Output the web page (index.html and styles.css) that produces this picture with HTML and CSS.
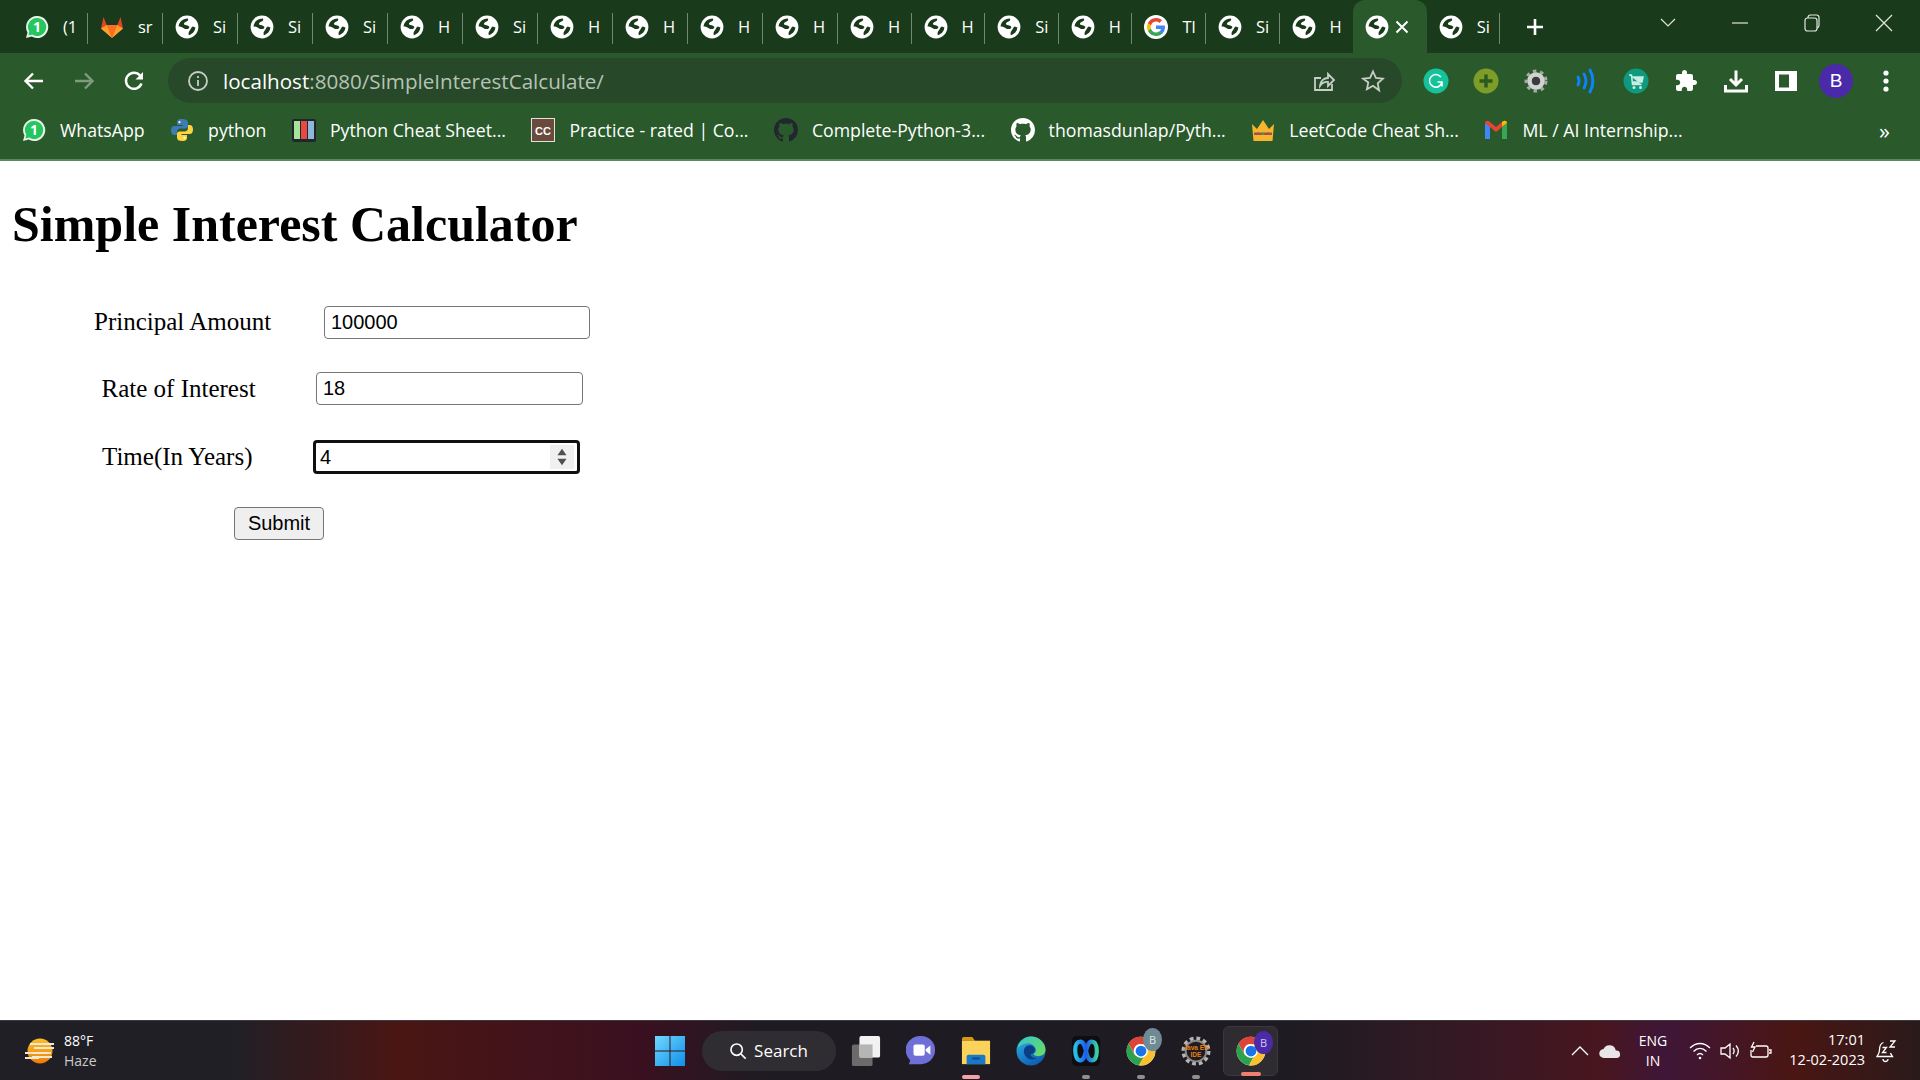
FILE: index.html
```html
<!DOCTYPE html>
<html lang="en">
<head>
<meta charset="utf-8">
<title>Simple Interest Calculator</title>
<link rel="stylesheet" href="styles.css">
</head>
<body>
<svg class="defs" aria-hidden="true">
  <defs>
    <linearGradient id="winG" x1="0" y1="0" x2="1" y2="1"><stop offset="0" stop-color="#6fd8ff"/><stop offset="1" stop-color="#0f8fe8"/></linearGradient>
    <linearGradient id="sunG" x1="0" y1="0" x2="0" y2="1"><stop offset="0" stop-color="#fbc02d"/><stop offset="1" stop-color="#ef7c08"/></linearGradient>
    <linearGradient id="edgeG" x1="0" y1="0" x2=".6" y2="1"><stop offset="0" stop-color="#2fb4ec"/><stop offset="1" stop-color="#0c5fb0"/></linearGradient>
    <linearGradient id="edgeH" x1="0" y1="0" x2="1" y2="1"><stop offset="0" stop-color="#36c6c8"/><stop offset="1" stop-color="#6fdc5c"/></linearGradient>
    <linearGradient id="webexG" x1="0" y1="0" x2="1" y2="0"><stop offset="0" stop-color="#27c0e8"/><stop offset=".5" stop-color="#1a5cf0"/><stop offset="1" stop-color="#3ad0a0"/></linearGradient>
    <symbol id="globe" viewBox="0 0 24 24">
      <circle cx="12" cy="12" r="11.400" fill="#fff"/>
      <path d="M3.600 11.500C3.800 7.300 7.300 3.600 12.800 3.500c1 1.300.2 2.500-1.300 3.100-1.600.7-3 1.600-2.400 3 1.400 1 3.800.6 5 2 .7 1.200-.2 2.200-1.400 2.400-2.600.2-3.500-.2-4.700-1.300-1.400-.8-2.700-1-4.400-1.200z" fill="#1a3a1c"/>
      <path d="M13.800 20.200c3.600-.8 6.200-3.900 6.600-7.600l-2.600-1.200c-1.400.4-1.800 2.200-2.700 3.600-.9 1.300-2.100 2.300-1.300 5.200z" fill="#1a3a1c"/>
    </symbol>
    <symbol id="whatsapp" viewBox="0 0 24 24">
      <path d="M12 1a11 11 0 0 0-9.500 16.500L1 23l5.700-1.500A11 11 0 1 0 12 1z" fill="#e9f5ea"/>
      <path d="M12 3a9 9 0 0 0-7.700 13.700L3.400 20.500l3.800-1A9 9 0 1 0 12 3z" fill="#25c55f"/>
      <text x="12" y="17" class="wa-num">1</text>
    </symbol>
    <symbol id="github" viewBox="0 0 16 16">
      <path d="M8 0C3.580 0 0 3.580 0 8c0 3.540 2.290 6.530 5.470 7.590.4.070.55-.17.55-.38 0-.19-.01-.82-.01-1.490-2.010.37-2.530-.49-2.690-.94-.09-.23-.48-.94-.82-1.130-.28-.15-.68-.52-.01-.53.63-.01 1.080.58 1.230.82.720 1.210 1.870.87 2.330.66.070-.52.28-.87.51-1.070-1.780-.2-3.640-.89-3.640-3.950 0-.87.31-1.590.82-2.150-.08-.2-.36-1.020.08-2.120 0 0 .67-.21 2.200.82.64-.18 1.320-.27 2-.27.68 0 1.360.09 2 .27 1.530-1.040 2.200-.82 2.200-.82.44 1.100.16 1.920.08 2.120.51.56.82 1.270.82 2.150 0 3.070-1.870 3.750-3.650 3.950.29.25.54.73.54 1.480 0 1.070-.01 1.930-.01 2.200 0 .21.15.46.55.38A8.013 8.013 0 0 0 16 8c0-4.420-3.580-8-8-8z"/>
    </symbol>
    <symbol id="chrome" viewBox="0 0 24 24">
      <circle cx="12" cy="12" r="11.500" fill="#fff"/>
      <path d="M12 .5A11.500 11.500 0 0 0 2 6.200l5 8.700A5.500 5.500 0 0 1 12 6.500h10A11.500 11.500 0 0 0 12 .5z" fill="#db4437"/>
      <path d="M2 6.200A11.500 11.500 0 0 0 10.400 23.400l5-8.800A5.500 5.500 0 0 1 7 14.900z" fill="#2ba24c"/>
      <path d="M22 6.500h-10a5.500 5.500 0 0 1 3.400 8.100l-5 8.800A11.500 11.500 0 0 0 22 6.500z" fill="#fbc02d"/>
      <circle cx="12" cy="12" r="5.500" fill="#fff"/>
      <circle cx="12" cy="12" r="4.300" fill="#1a73e8"/>
    </symbol>
  </defs>
</svg>

<header class="chrome">
  <div class="tabstrip">
    <div class="tab"><svg class="fav"><use href="#whatsapp"/></svg><span class="tab-title">(1</span></div>
    <div class="tab">
      <svg class="fav" viewBox="0 0 24 24"><path d="M1 13.500 3.500 2l3.200 8h10.600l3.200-8L23 13.500 12 23z" fill="#e24329"/><path d="M6.700 10h10.600L12 23z" fill="#fc6d26"/><path d="M1 13.500 12 23l-5.300-13zM23 13.500 12 23l5.300-13z" fill="#fca326"/></svg>
      <span class="tab-title">sr</span>
    </div>
    <div class="tab"><svg class="fav"><use href="#globe"/></svg><span class="tab-title">Si</span></div>
    <div class="tab"><svg class="fav"><use href="#globe"/></svg><span class="tab-title">Si</span></div>
    <div class="tab"><svg class="fav"><use href="#globe"/></svg><span class="tab-title">Si</span></div>
    <div class="tab"><svg class="fav"><use href="#globe"/></svg><span class="tab-title">H</span></div>
    <div class="tab"><svg class="fav"><use href="#globe"/></svg><span class="tab-title">Si</span></div>
    <div class="tab"><svg class="fav"><use href="#globe"/></svg><span class="tab-title">H</span></div>
    <div class="tab"><svg class="fav"><use href="#globe"/></svg><span class="tab-title">H</span></div>
    <div class="tab"><svg class="fav"><use href="#globe"/></svg><span class="tab-title">H</span></div>
    <div class="tab"><svg class="fav"><use href="#globe"/></svg><span class="tab-title">H</span></div>
    <div class="tab tab-n"><svg class="fav"><use href="#globe"/></svg><span class="tab-title">H</span></div>
    <div class="tab tab-n"><svg class="fav"><use href="#globe"/></svg><span class="tab-title">H</span></div>
    <div class="tab tab-n"><svg class="fav"><use href="#globe"/></svg><span class="tab-title">Si</span></div>
    <div class="tab tab-n"><svg class="fav"><use href="#globe"/></svg><span class="tab-title">H</span></div>
    <div class="tab tab-n">
      <svg class="fav" viewBox="0 0 24 24"><circle cx="12" cy="12" r="12" fill="#fff"/><path d="M21 12.300c0-.7-.1-1.300-.2-1.900H12v3.600h5a4.300 4.300 0 0 1-1.900 2.800v2.300h3A9 9 0 0 0 21 12.300z" fill="#4285f4"/><path d="M12 21c2.400 0 4.500-.8 6-2.200l-3-2.300c-.8.600-1.800.9-3 .9-2.300 0-4.300-1.600-5-3.700H4v2.400A9 9 0 0 0 12 21z" fill="#34a853"/><path d="M7 13.700a5.400 5.400 0 0 1 0-3.400V7.900H4a9 9 0 0 0 0 8.200z" fill="#fbbc05"/><path d="M12 6.600c1.300 0 2.500.5 3.400 1.300L18 5.300A9 9 0 0 0 4 7.900l3 2.400c.7-2.100 2.700-3.700 5-3.700z" fill="#ea4335"/></svg>
      <span class="tab-title">Tl</span>
    </div>
    <div class="tab tab-n"><svg class="fav"><use href="#globe"/></svg><span class="tab-title">Si</span></div>
    <div class="tab tab-n tab-nosep"><svg class="fav"><use href="#globe"/></svg><span class="tab-title">H</span></div>
    <div class="tab tab-n tab-active">
      <svg class="fav"><use href="#globe"/></svg>
      <svg class="tab-close" viewBox="0 0 14 14"><path d="M1.500 1.500l11 11M12.500 1.500l-11 11"/></svg>
    </div>
    <div class="tab tab-n"><svg class="fav"><use href="#globe"/></svg><span class="tab-title">Si</span></div>
    <svg class="newtab" viewBox="0 0 20 20"><path d="M10 2v16M2 10h16"/></svg>
    <div class="winctl">
      <svg class="wc" viewBox="0 0 20 20"><path d="M3 6l7 7 7-7"/></svg>
      <svg class="wc" viewBox="0 0 20 20"><path d="M2 10h16"/></svg>
      <svg class="wc" viewBox="0 0 20 20"><rect x="3" y="5" width="12" height="13" rx="2.500"/><path d="M6 5V4.500A2.500 2.500 0 0 1 8.500 2h6A2.500 2.500 0 0 1 17 4.500v8a2.500 2.500 0 0 1-2 2.300"/></svg>
      <svg class="wc" viewBox="0 0 20 20"><path d="M2 2l16 16M18 2L2 18"/></svg>
    </div>
  </div>

  <div class="toolbar">
    <button class="tbtn"><svg viewBox="0 0 24 24" class="ico-stroke"><path d="M21 12H4M11 4.500 3.500 12l7.500 7.500"/></svg></button>
    <button class="tbtn"><svg viewBox="0 0 24 24" class="ico-stroke ico-dim"><path d="M3 12h17M13 4.500l7.500 7.500-7.500 7.500"/></svg></button>
    <button class="tbtn"><svg viewBox="0 0 24 24" class="ico-stroke"><path d="M19.500 14.500A8 8 0 1 1 18 6.500"/><path class="ico-fill" d="M21 3v7.500h-7.500z"/></svg></button>
    <div class="omnibox">
      <svg class="omni-ico" viewBox="0 0 24 24"><circle cx="12" cy="12" r="9" class="omni-ring"/><path d="M12 11v6M12 7v2" class="omni-ring"/></svg>
      <span class="url"><span class="url-host">localhost</span>:8080/SimpleInterestCalculate/</span>
      <svg class="omni-ico omni-share" viewBox="0 0 24 24"><path d="M20 15v6H3V9h6M8 17c0-5 4-8 8-8V5l6 6-6 6v-4c-3-.3-6 1-8 4z" class="omni-ring"/></svg>
      <svg class="omni-ico" viewBox="0 0 24 24"><path d="M12 2.500l2.900 6.400 7 .8-5.200 4.700 1.400 6.900L12 16.800l-6.100 3.500 1.400-6.900L2.100 9.700l7-.8z" class="omni-ring"/></svg>
    </div>
    <button class="tbtn"><svg viewBox="0 0 24 24"><circle cx="12" cy="12" r="12.500" fill="#15c39a"/><path d="M16.800 8A6.300 6.300 0 1 0 18 13h-4.500M18 17.500V13" fill="none" stroke="#fff" stroke-width="1.600"/></svg></button>
    <button class="tbtn"><svg viewBox="0 0 24 24"><circle cx="12" cy="12" r="12.500" fill="#7d9c28"/><path d="M12 5.500v13M5.500 12h13" stroke="#2b5a20" stroke-width="3.400"/></svg></button>
    <button class="tbtn"><svg viewBox="0 0 24 24"><circle cx="12" cy="12" r="10" fill="none" stroke="#a8a8a8" stroke-width="3" stroke-dasharray="3.500 3.780"/><circle cx="12" cy="12" r="6.500" fill="none" stroke="#d2d2d2" stroke-width="4.500"/><circle cx="12" cy="12" r="4" fill="#3b3b3b"/></svg></button>
    <button class="tbtn"><svg viewBox="0 0 24 24" fill="none" stroke="#0a84ff" stroke-linecap="round"><path d="M4 8c1.300 2.500 1.300 5.500 0 8" stroke-width="2.800"/><path d="M10 5c2.400 4.300 2.400 9.700 0 14" stroke-width="2.800"/><path d="M16 1c3.800 6.500 3.800 15.500 0 22" stroke-width="3"/></svg></button>
    <button class="tbtn"><svg viewBox="0 0 24 24"><circle cx="12" cy="12" r="12.500" fill="#0d9a7e"/><path d="M5 6h2.500l1 9.500h9M8 8h11l-1 5H8.500" fill="#c9ece3" stroke="#c9ece3" stroke-width="1.500"/><circle cx="10" cy="18.500" r="1.500" fill="#c9ece3"/><circle cx="16.500" cy="18.500" r="1.500" fill="#c9ece3"/></svg></button>
    <button class="tbtn"><svg viewBox="0 0 24 24" fill="#fff"><path d="M20.500 11H19V7c0-1.100-.9-2-2-2h-4V3.500C13 2.120 11.880 1 10.500 1S8 2.120 8 3.500V5H4c-1.100 0-1.990.9-1.990 2v3.800H3.500c1.490 0 2.700 1.210 2.700 2.700s-1.210 2.700-2.700 2.700H2V20c0 1.100.9 2 2 2h3.800v-1.500c0-1.490 1.210-2.700 2.700-2.700 1.490 0 2.700 1.210 2.700 2.700V22H17c1.100 0 2-.9 2-2v-4h1.500c1.380 0 2.500-1.120 2.500-2.500S21.880 11 20.500 11z"/></svg></button>
    <button class="tbtn"><svg viewBox="0 0 24 24" class="ico-stroke ico-thick"><path d="M12 1.500v14M6 10l6 6 6-6M1.500 16v6h21v-6"/></svg></button>
    <button class="tbtn"><svg viewBox="0 0 24 24"><path d="M1 2h22v20H1zM5 5.500v13h10v-13z" fill="#fff" fill-rule="evenodd"/></svg></button>
    <button class="tbtn"><span class="avatar">B</span></button>
    <button class="tbtn"><svg viewBox="0 0 24 24" fill="#fff"><circle cx="12" cy="4" r="2.600"/><circle cx="12" cy="12" r="2.600"/><circle cx="12" cy="20" r="2.600"/></svg></button>
  </div>

  <nav class="bookmarks">
    <a class="bm"><svg class="fav"><use href="#whatsapp"/></svg>WhatsApp</a>
    <a class="bm"><svg class="fav" viewBox="0 0 24 24"><path d="M12 1C7 1 7 3 7 5v2h5.500v1H4.500C2 8 1 10 1 12.500S2 17 4.500 17H7v-3c0-2 1.500-3.500 3.500-3.500h5c1.500 0 2.500-1 2.500-2.500V4.500C18 2 15 1 12 1z" fill="#3b7db3"/><path d="M12 23c5 0 5-2 5-4v-2h-5.500v-1h8c2.500 0 3.500-2 3.500-4.500S22 7 19.500 7H18v3c0 2-1.500 3.500-3.500 3.500h-5C8 13.500 7 14.500 7 16v3.500C7 22 9 23 12 23z" fill="#fdd33f"/><circle cx="9.500" cy="4.200" r="1.100" fill="#fff"/><circle cx="14.500" cy="19.800" r="1.100" fill="#fff"/></svg>python</a>
    <a class="bm"><svg class="fav" viewBox="0 0 24 24"><rect x="0" y="1" width="24" height="23" rx="2" fill="#20262e"/><rect x="2" y="3" width="6" height="18" fill="#a4e59a"/><rect x="9" y="3" width="6" height="18" fill="#e8483f"/><rect x="16" y="3" width="6" height="18" fill="#8fb8d8"/></svg>Python Cheat Sheet...</a>
    <a class="bm"><svg class="fav" viewBox="0 0 24 24"><rect x=".5" y=".5" width="23" height="23" fill="#6a4a3c" stroke="#e8e0d8"/><text x="12" y="16.500" class="cc-text">CC</text></svg>Practice - rated | Co...</a>
    <a class="bm"><svg class="fav gh-dark"><use href="#github"/></svg>Complete-Python-3...</a>
    <a class="bm"><svg class="fav gh-light"><use href="#github"/></svg>thomasdunlap/Pyth...</a>
    <a class="bm"><svg class="fav" viewBox="0 0 24 24"><path d="M1 6l5 5 6-9 6 9 5-5-1.500 17h-19z" fill="#f5b52e"/><rect x="3" y="14.500" width="18" height="2.500" fill="#a0563c"/><circle cx="7" cy="15.700" r="1.300" fill="#c23a6a"/><circle cx="12" cy="15.700" r="1.300" fill="#3ca05a"/><circle cx="17" cy="15.700" r="1.300" fill="#c23a6a"/></svg>LeetCode Cheat Sh...</a>
    <a class="bm"><svg class="fav" viewBox="0 0 24 24"><path d="M1 21V5l5 3.500V21z" fill="#4285f4"/><path d="M23 21V5l-5 3.500V21z" fill="#34a853"/><path d="M1 5c0-2 2.300-3 4-1.700L12 9l7-5.700c1.700-1.300 4-.3 4 1.700l-5 4-6 5-6-5z" fill="#ea4335"/><path d="M18 8.500 23 5c0-2-2.300-3-4-1.700L18 4z" fill="#fbbc04"/></svg>ML / AI Internship...</a>
    <span class="bm-more">»</span>
  </nav>
</header>

<main class="page">
  <h1 class="title">Simple Interest Calculator</h1>
  <form class="form">
    <div class="row row-a"><label class="lbl">Principal Amount</label><input class="field" type="text" value="100000"></div>
    <div class="row row-b"><label class="lbl lbl-mid">Rate of Interest</label><input class="field" type="text" value="18"></div>
    <div class="row row-c">
      <label class="lbl">Time(In Years)</label>
      <div class="field-focus">
        <input class="field-inner" type="text" value="4">
        <span class="spin"><svg viewBox="0 0 12 22"><path d="M6 2l5 7H1zM6 20l5-7H1z"/></svg></span>
      </div>
    </div>
    <div class="row-btn"><button class="submit" type="button">Submit</button></div>
  </form>
</main>

<footer class="taskbar">
  <div class="tb-left">
    <svg class="sun" viewBox="0 0 32 28"><circle cx="16" cy="14" r="12.500" fill="url(#sunG)"/><path d="M6 7h24M10 11h20M1 16h26M8 20h20M1 21h14" stroke="#f3e9cf" stroke-width="2"/></svg>
    <div class="weather"><span class="w-temp">88°F</span><span class="w-cond">Haze</span></div>
  </div>
  <div class="tb-app">
    <svg class="tb-ico tb-win" viewBox="0 0 30 30"><path d="M0 0h14.500v14.500H0zM15.500 0H30v14.500H15.500zM0 15.500h14.500V30H0zM15.500 15.500H30V30H15.500z" fill="url(#winG)"/></svg>
  </div>
  <div class="tb-search">
    <svg class="s-ico" viewBox="0 0 20 20"><circle cx="8.500" cy="8.500" r="6.300"/><path d="M13 13l5.500 5.500"/></svg>
    <span>Search</span>
  </div>
  <div class="tb-app tb-first">
    <svg class="tb-ico" viewBox="0 0 32 34"><rect x="1" y="10" width="22" height="23" rx="2" fill="#6b6b6b"/><rect x="9" y="1" width="22" height="23" rx="2" fill="#f2f2f2"/><rect x="9" y="10" width="14" height="14" fill="#b5b5b5"/></svg>
  </div>
  <div class="tb-app">
    <svg class="tb-ico" viewBox="0 0 32 34"><path d="M16 1a15 15 0 0 1 0 30H3l1.500-4A15 15 0 0 1 16 1z" fill="#6f6fd8"/><rect x="8" y="10" width="12" height="12" rx="2" fill="#fff"/><path d="M21 15l5-4v10l-5-4z" fill="#fff"/></svg>
  </div>
  <div class="tb-app">
    <svg class="tb-ico" viewBox="0 0 32 34"><path d="M1 4a2 2 0 0 1 2-2h9l3 4H1z" fill="#d59a12"/><path d="M1 6h30v25H1z" fill="#fcd35a"/><path d="M8 21h16a2 2 0 0 1 2 2v8H6v-8a2 2 0 0 1 2-2z" fill="#1a78c8"/><rect x="12" y="24" width="8" height="2" fill="#0b4a88"/></svg>
    <span class="ind ind-pink"></span>
  </div>
  <div class="tb-app">
    <svg class="tb-ico" viewBox="0 0 32 32"><circle cx="16" cy="16" r="15.500" fill="url(#edgeG)"/><path d="M1.500 13C3 6 9 .5 16 .5c8.500 0 15.500 6.500 15.500 14 0 4-2.800 7-7.500 7-3 0-5-1-5.500-2.500 2.500-1 3.500-3 2.500-5.500C19.500 9.500 15 7 11 8 6.500 9 3 11 1.500 13z" fill="url(#edgeH)"/><path d="M20.500 15.500C20.500 11 16.500 9 13 10c-4 1.200-6 5.500-3.500 10.500 1.500 3 4.500 4.500 7.500 4.500 2.500 0 4-.5 5-1.500-3.500.5-6-1.500-6.500-4 2.500 0 4.500-1.800 4.500-4.500z" fill="#0a3f86"/></svg>
  </div>
  <div class="tb-app">
    <svg class="tb-ico" viewBox="0 0 32 34"><rect x="1" y="1" width="30" height="32" rx="5" fill="#0e0e12"/><path d="M4.500 16c0-6 2.500-9 5.500-9 3.500 0 4.700 4.500 6 10s2.500 10 6 10c3 0 5.500-3 5.500-10s-2.500-10-5.500-10c-3.500 0-4.700 4.500-6 10s-2.500 10-6 10c-3 0-5.500-4-5.500-11z" fill="none" stroke="url(#webexG)" stroke-width="4.500"/></svg>
    <span class="ind"></span>
  </div>
  <div class="tb-app">
    <svg class="tb-ico tb-chrome"><use href="#chrome"/></svg>
    <span class="badge badge-gray">B</span>
    <span class="ind"></span>
  </div>
  <div class="tb-app">
    <svg class="tb-ico" viewBox="0 0 32 32"><circle cx="16" cy="16" r="13.500" fill="none" stroke="#b5b5b5" stroke-width="4" stroke-dasharray="4 3.070"/><circle cx="16" cy="16" r="11" fill="none" stroke="#8a8a8a" stroke-width="2"/><text x="16" y="14.500" class="ee">Java EE</text><text x="16" y="22" class="ee">IDE</text></svg>
    <span class="ind"></span>
  </div>
  <div class="tb-app tb-active">
    <svg class="tb-ico tb-chrome"><use href="#chrome"/></svg>
    <span class="badge">B</span>
    <span class="ind ind-active"></span>
  </div>
  <div class="tray">
    <svg class="tr-ico" viewBox="0 0 20 20"><path d="M2 14l8-8 8 8"/></svg>
    <svg class="tr-ico" viewBox="0 0 24 20"><path d="M6 17a4.500 4.500 0 0 1-.5-9 6.500 6.500 0 0 1 12.300 1.500A3.800 3.800 0 0 1 19 17z" class="cloud"/></svg>
    <div class="lang"><span>ENG</span><span>IN</span></div>
    <svg class="tr-ico" viewBox="0 0 22 20"><path d="M1 7c6-6 14-6 20 0M4.500 10.500c4-4 9-4 13 0M8 14c2-2 4-2 6 0"/><circle cx="11" cy="17" r="1.300" class="tr-fill"/></svg>
    <svg class="tr-ico" viewBox="0 0 22 20"><path d="M2 7v6h4l5 4V3L6 7zM14 7c1.500 2 1.500 4 0 6M17 4.500c3 3.500 3 7.500 0 11"/></svg>
    <svg class="tr-ico" viewBox="0 0 24 20"><path d="M8 5h10a2 2 0 0 1 2 2v7a2 2 0 0 1-2 2H5a2 2 0 0 1-2-2V9M21 9h2v3h-2"/><path d="M6 1L3.500 6H7L4.500 11" /></svg>
    <div class="clock"><span>17:01</span><span>12-02-2023</span></div>
    <svg class="bell" viewBox="0 0 22 24"><path d="M8.500 3.500C5 4.500 4.500 8 4.500 11c0 3-1.500 5-2.500 6.500h15.500c-.7-1-1.500-2-2-3.500M8 20a2.500 2.500 0 0 0 5 0M7.500 8.500h4l-4 5h4M15 2h5l-5 6h5"/></svg>
  </div>
</footer>
</body>
</html>
```
FILE: styles.css
```css
* { box-sizing: border-box; }
html, body { height: 100%; }
body {
  margin: 0;
  height: 100vh;
  display: flex;
  flex-direction: column;
  overflow: hidden;
  background: #fff;
  font-family: "Liberation Serif", serif;
}
.defs { display: block; width: 0; height: 0; overflow: hidden; }

/* Browser chrome */
.chrome { flex: 0 0 161px; display: flex; flex-direction: column; font-family: "Open Sans", "Noto Sans", sans-serif; color: #fff; }
.tabstrip { flex: 0 0 53px; display: flex; align-items: center; padding-left: 13px; background: #1a3a1c; }
.tab {
  flex: 0 0 75px;
  height: 100%;
  display: flex;
  align-items: center;
  gap: 14px;
  padding: 0 0 0 12px;
  position: relative;
}
.tab-n { flex-basis: 73.6px; }
.tab::after {
  content: "";
  position: absolute;
  right: 0;
  top: 13px;
  height: 31px;
  width: 1px;
  background: #6f8a70;
}
.tab-nosep::after, .tab-active::after { display: none; }
.tab-active { background: #2a5a2c; border-radius: 12px 12px 0 0; height: 53px; gap: 6px; }
.fav { flex: 0 0 24px; width: 24px; height: 24px; }
.tab-title { font-size: 16.500px; line-height: 24px; white-space: nowrap; }
.tab-close { width: 14px; height: 14px; fill: none; stroke: #fff; stroke-width: 2; }
.newtab { width: 20px; height: 20px; margin-left: 25px; fill: none; stroke: #fff; stroke-width: 2.600; }
.winctl { margin-left: auto; display: flex; align-self: flex-start; }
.wc { width: 72px; height: 20px; margin-top: 13px; fill: none; stroke: #dfe7df; stroke-width: 1.200; }

.toolbar { flex: 0 0 55px; display: flex; align-items: center; padding: 0 9px; background: #2a5a2c; }
.tbtn { flex: 0 0 50px; width: 50px; height: 44px; padding: 0; border: 0; background: none; display: flex; align-items: center; justify-content: center; }
.tbtn svg { width: 24px; height: 24px; overflow: visible; }
.ico-stroke { fill: none; stroke: #fff; stroke-width: 2.400; }
.ico-dim { stroke: #7f9c80; }
.ico-thick { stroke-width: 3; }
.ico-fill { fill: #fff; stroke: none; }
.avatar { width: 34px; height: 34px; border-radius: 50%; background: #4a2aa8; color: #fff; font-size: 19px; line-height: 34px; text-align: center; }
.omnibox {
  flex: 1;
  height: 45px;
  margin: 0 9px;
  padding: 0 17px 0 18px;
  display: flex;
  align-items: center;
  border-radius: 23px;
  background: #28482a;
}
.omni-ico { flex: 0 0 24px; width: 24px; height: 24px; }
.omni-ring { fill: none; stroke: #c6cfc6; stroke-width: 1.800; }
.omni-share { margin-left: auto; margin-right: 25px; }
.url { margin-left: 13px; font-size: 20.600px; color: #b5c3b5; white-space: nowrap; }
.url-host { color: #fff; }

.bookmarks {
  flex: 0 0 53px;
  display: flex;
  align-items: center;
  gap: 25.500px;
  padding: 0 0 7px 22px;
  background: #2a5a2c;
  border-bottom: 2px solid #5a8a5c;
}
.bm { display: flex; align-items: center; gap: 14px; font-size: 17.700px; white-space: nowrap; }
.gh-dark { fill: #22272e; }
.gh-light { fill: #fff; }
.bm-more { margin-left: auto; margin-right: 30px; font-size: 22px; line-height: 24px; }
.wa-num { font: 700 14px "Open Sans", sans-serif; fill: #fff; text-anchor: middle; }
.cc-text { font: 800 11px "Liberation Sans", sans-serif; fill: #fff; text-anchor: middle; }

/* Page content */
.page { flex: 1; padding: 0 0 0 12px; overflow: hidden; color: #000; }
.title { margin: 36px 0 53px; font-size: 50px; line-height: 55px; font-weight: 700; }
.form { display: flex; flex-direction: column; gap: 34.300px; margin-left: -12px; }
.row { display: grid; align-items: center; height: 33px; }
.row-a { padding-left: 94px; grid-template-columns: 230px 265.500px; }
.row-b { padding-left: 101.500px; grid-template-columns: 214.500px 267px; }
.row-c { padding-left: 102px; grid-template-columns: 211px 266.500px; }
.lbl { font-size: 25px; line-height: 33px; margin-bottom: 2px; }
.lbl-mid { margin-bottom: 0; }
.field {
  width: 100%;
  height: 33px;
  padding: 0 6px;
  border: 1.500px solid #767676;
  border-radius: 4px;
  background: #fff;
  font: 20px "Liberation Sans", sans-serif;
  color: #000;
}
.field-focus {
  height: 34px;
  padding: 0 3px 0 4px;
  display: flex;
  align-items: center;
  border: 3px solid #101010;
  border-radius: 4px;
  background: #fff;
}
.field-inner { flex: 1; min-width: 0; padding: 0; border: 0; outline: 0; font: 20px "Liberation Sans", sans-serif; color: #000; background: none; }
.spin { flex: 0 0 24px; height: 24px; display: flex; align-items: center; justify-content: center; background: #f0f0f0; }
.spin svg { width: 12px; height: 20px; fill: #505050; }
.row-btn { padding-left: 234px; }
.submit {
  width: 90px;
  height: 33px;
  padding: 0;
  border: 1.500px solid #767676;
  border-radius: 4px;
  background: #efefef;
  font: 20px "Liberation Sans", sans-serif;
  color: #000;
}

/* Taskbar */
.taskbar {
  flex: 0 0 60px;
  display: flex;
  align-items: center;
  font-family: "Open Sans", "Noto Sans", sans-serif;
  color: #fff;
  border-top: 1px solid #3c3a40;
  background: linear-gradient(90deg, #201f26 0, #201f26 230px, #4a1614 400px, #3a1020 640px, #1f1b22 760px, #1f1b22 1300px, #3a1824 1500px, #48161e 1600px, #3f1638 1665px, #4a1614 1790px, #2a1a1a 1920px);
}
.tb-left { flex: 0 0 642px; display: flex; align-items: center; gap: 8px; padding-left: 24px; }
.sun { width: 32px; height: 28px; }
.weather { display: flex; flex-direction: column; font-size: 14px; line-height: 20px; }
.w-cond { color: #c9c9c9; }
.tb-app { flex: 0 0 55px; height: 50px; display: flex; align-items: center; justify-content: center; position: relative; }
.tb-first { margin-left: 2.500px; }
.tb-ico { width: 30px; height: 32px; }
.tb-win { width: 30px; height: 30px; }
.tb-chrome { width: 30px; height: 30px; }
.tb-search { flex: 0 0 134px; height: 40px; margin-left: 4.500px; display: flex; align-items: center; justify-content: center; gap: 7px; border-radius: 20px; background: #2f2d32; font-size: 17px; }
.s-ico { width: 18px; height: 18px; fill: none; stroke: #fff; stroke-width: 1.800; }
.tb-active { border-radius: 6px; background: #2f2c31; border: 1px solid #3b383d; }
.ind { position: absolute; left: 50%; bottom: -3px; width: 8px; height: 4px; margin-left: -4px; border-radius: 2px; background: #8f8f8f; }
.ind-pink { width: 18px; margin-left: -14px; background: #f4a0ad; }
.ind-active { width: 20px; margin-left: -10px; background: #ee8070; bottom: -1px; }
.badge { position: absolute; left: 30px; top: 4px; width: 19px; height: 23px; border-radius: 50%; background: #4a2aa8; font-size: 11px; line-height: 23px; text-align: center; color: #cfc8ee; }
.badge-gray { background: #6e8a94; color: #dfe7ea; top: 2px; }
.ee { font: 700 7px "Liberation Sans", sans-serif; fill: #e8820c; text-anchor: middle; }
.tray { margin-left: auto; padding-right: 23px; display: flex; align-items: center; }
.tr-ico { flex: 0 0 30px; width: 30px; height: 20px; fill: none; stroke: #fff; stroke-width: 1.300; }
.cloud { fill: #e9e4e6; stroke: none; }
.tr-fill { fill: #fff; stroke: none; }
.lang { flex: 0 0 56px; margin-right: 4px; display: flex; flex-direction: column; align-items: center; font-size: 14px; line-height: 20px; }
.clock { flex: 0 0 90px; margin: -2px -2px 0 0; display: flex; flex-direction: column; align-items: flex-end; font-size: 14.500px; line-height: 20px; }
.bell { width: 22px; height: 24px; margin-left: 12px; fill: none; stroke: #fff; stroke-width: 1.300; }
```
